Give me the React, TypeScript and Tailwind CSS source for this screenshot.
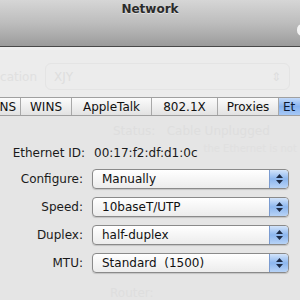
import React from 'react';

const font = { fontFamily: '"DejaVu Sans", "Liberation Sans", sans-serif' };

function Popup({ value }: { value: string }) {
  return (
    <div className="flex h-[20px] w-[197px] items-stretch overflow-hidden rounded-[4px] border border-[#8a8a8a] bg-gradient-to-b from-[#ffffff] to-[#ececec] shadow-[0_1px_1px_rgba(0,0,0,0.15)]">
      <div className="flex flex-1 items-center whitespace-pre pl-[9px] text-[12px] leading-none text-[#111]">{value}</div>
      <div className="flex w-[19px] flex-col items-center justify-center gap-[2px] rounded-r-[3px] border-l border-[#7a9bd0] bg-gradient-to-b from-[#d3e4fa] via-[#8cb6ee] to-[#b8d3f6]">
        <svg width="7" height="4" viewBox="0 0 7 4"><path d="M0 4 L3.5 0 L7 4 Z" fill="#1d2b45" /></svg>
        <svg width="7" height="4" viewBox="0 0 7 4"><path d="M0 0 L3.5 4 L7 0 Z" fill="#1d2b45" /></svg>
      </div>
    </div>
  );
}

function Row({ label, value }: { label: string; value: string }) {
  return (
    <div className="flex items-center">
      <div className="w-[84px] pr-[1px] text-right text-[12px] text-[#1a1a1a]">{label}</div>
      <div className="ml-[8px]">
        <Popup value={value} />
      </div>
    </div>
  );
}

const tabs = [
  { label: 'NS', w: 'w-[21px]', pl: 'justify-end pr-[4px]' },
  { label: 'WINS', w: 'w-[51px]', pl: 'justify-center' },
  { label: 'AppleTalk', w: 'w-[80px]', pl: 'justify-center' },
  { label: '802.1X', w: 'w-[66px]', pl: 'justify-center' },
  { label: 'Proxies', w: 'w-[61px]', pl: 'justify-center' },
];

export default function App() {
  return (
    <div className="flex h-[300px] w-[300px] flex-col overflow-hidden bg-[#e7e7e7]" style={font}>
      {/* Title bar */}
      <div className="relative h-[47px] shrink-0 border-b border-[#4a4a4a] bg-gradient-to-b from-[#d6d6d6] via-[#bdbdbd] to-[#9c9c9c]">
        <div className="text-center text-[12px] font-semibold text-[#2b2b2b] [text-shadow:0_1px_0_rgba(255,255,255,0.5)]">Network</div>
        <div className="absolute right-[-8px] top-[24px] h-[12px] w-[11px] rounded-full bg-[#f4f4f4]" />
      </div>

      {/* Faded location row */}
      <div className="h-[3px] shrink-0 bg-[#f0f0f0]" />
      <div className="flex h-[47px] shrink-0 items-center bg-[#ececec] pt-[6px]">
        <div className="w-[37px] overflow-hidden whitespace-nowrap text-right text-[12px] text-[#e0e0e0] [direction:rtl]">Location:</div>
        <div className="ml-[8px] flex h-[27px] w-[245px] items-center justify-between rounded-[6px] border border-[#e4e4e4] px-[8px] text-[12px] text-[#dedede]">
          <span>XJY</span>
          <span>⇕</span>
        </div>
      </div>

      {/* Tabs */}
      <div className="flex h-[19px] shrink-0 border-y border-[#a0a0a0] bg-gradient-to-b from-[#fbfbfb] to-[#e2e2e2] text-[12px] text-[#111]">
        {tabs.map((t) => (
          <div key={t.label} className={`flex ${t.w} items-center ${t.pl} border-r border-[#a8a8a8]`}>
            {t.label}
          </div>
        ))}
        <div className="flex flex-1 items-center bg-gradient-to-b from-[#c3dafa] via-[#86b2ef] to-[#a6c8f6] pl-[4px] text-[#0d1a33]">Et</div>
      </div>

      {/* Content */}
      <div className="flex min-h-0 flex-1 flex-col overflow-hidden bg-[#e5e5e5]">
        <div className="shrink-0 whitespace-pre pl-[113px] pt-[6px] text-[12px] text-[#dedede]">Status:   Cable Unplugged</div>
        <div className="flex shrink-0 items-center pt-[4px]">
          <div className="w-[85px] text-right text-[12px] text-[#1a1a1a]">Ethernet ID:</div>
          <div className="ml-[9px] text-[12px] text-[#1a1a1a]">00:17:f2:df:d1:0c</div>
          <div className="ml-[6px] -translate-y-[5px] whitespace-nowrap text-[10px] text-[#e0e0e0]">the Ethernet is not</div>
        </div>
        <div className="mt-[7px] flex shrink-0 flex-col gap-[8px]">
          <Row label="Configure:" value="Manually" />
          <Row label="Speed:" value="10baseT/UTP" />
          <Row label="Duplex:" value="half-duplex" />
          <Row label="MTU:" value="Standard  (1500)" />
        </div>
        <div className="shrink-0 pl-[110px] pt-[11px] text-[12px] text-[#dedede]">Router:</div>
      </div>
    </div>
  );
}
